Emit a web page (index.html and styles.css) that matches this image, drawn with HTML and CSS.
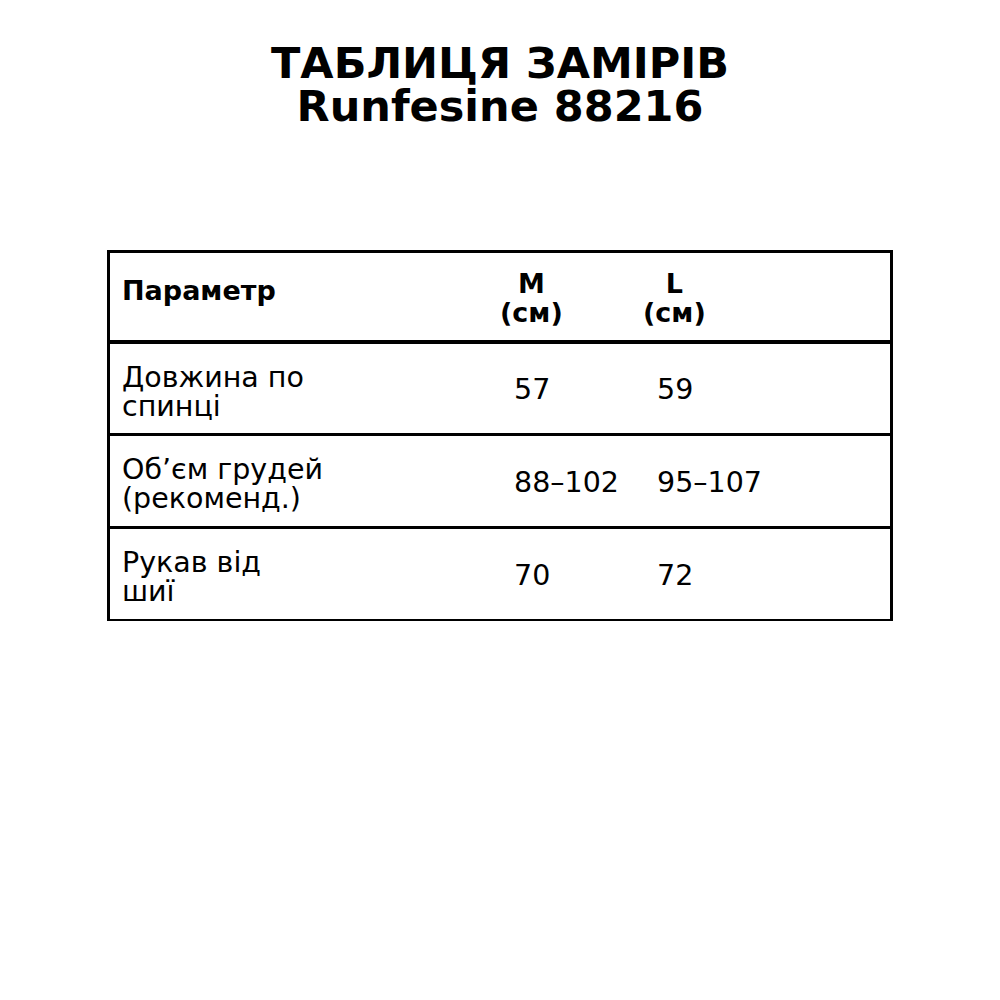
FILE: index.html
```html
<!DOCTYPE html>
<html lang="uk">
<head>
<meta charset="utf-8">
<link rel="stylesheet" href="styles.css">
</head>
<body>
<h1 class="title">ТАБЛИЦЯ ЗАМІРІВ<br>Runfesine 88216</h1>
<div class="table">
  <div class="row head">
    <div class="cell label"><span class="param">Параметр</span></div>
    <div class="cell size"><span class="hsize">M<br>(см)</span></div>
    <div class="cell size"><span class="hsize">L<br>(см)</span></div>
  </div>
  <div class="row r1">
    <div class="cell label">Довжина по<br>спинці</div>
    <div class="cell val">57</div>
    <div class="cell val">59</div>
  </div>
  <div class="row r2">
    <div class="cell label">Об’єм грудей<br>(рекоменд.)</div>
    <div class="cell val">88–102</div>
    <div class="cell val">95–107</div>
  </div>
  <div class="row last">
    <div class="cell label">Рукав від<br>шиї</div>
    <div class="cell val">70</div>
    <div class="cell val">72</div>
  </div>
</div>
</body>
</html>
```
FILE: styles.css
```css
html, body {
  margin: 0;
  padding: 0;
  background: #fff;
  color: #000;
  font-family: "DejaVu Sans", sans-serif;
}
.title {
  margin: 0;
  padding-top: 42px;
  text-align: center;
  font-size: 43px;
  line-height: 43px;
  font-weight: bold;
}
.table {
  margin: 122px 0 0 107px;
  width: 786px;
  box-sizing: border-box;
  border: 3px solid #000;
  border-bottom-width: 2px;
}
.row {
  display: grid;
  grid-template-columns: 390px 143px 1fr;
  height: 89px;
  border-bottom: 3px solid #000;
  align-items: center;
}
.row.head {
  height: 87px;
  border-bottom-width: 4px;
}
.row.r2 {
  height: 90px;
}
.row.last {
  border-bottom: none;
  height: 90px;
}
.cell {
  font-size: 28.5px;
  line-height: 29px;
}
.label {
  padding-left: 12px;
  padding-top: 6px;
}
.val {
  padding-left: 14px;
  padding-top: 2px;
}
.head .cell {
  font-size: 27px;
  font-weight: bold;
}
.head .label {
  padding-top: 0;
}
.param {
  display: block;
  margin-top: -12px;
}
.head .size {
  padding-top: 3px;
}
.hsize {
  display: inline-block;
  text-align: center;
}
```
